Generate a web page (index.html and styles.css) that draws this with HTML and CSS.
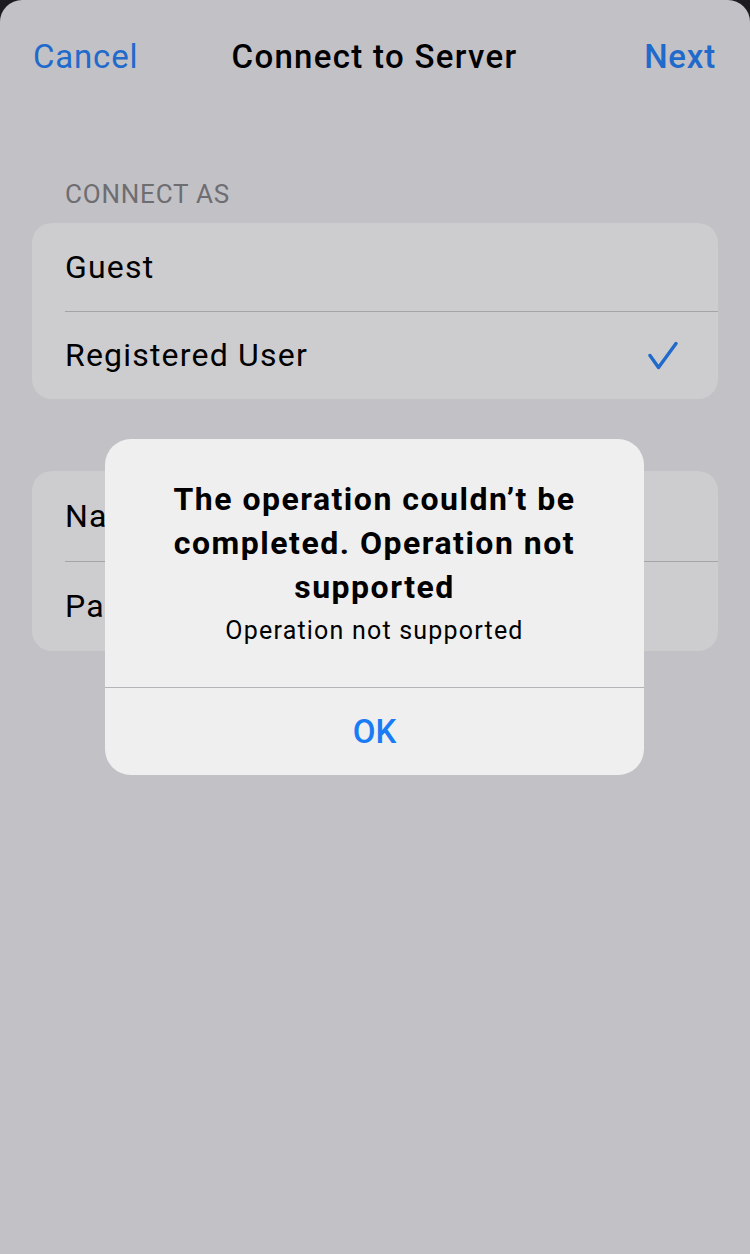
FILE: index.html
```html
<!DOCTYPE html>
<html lang="en">
<head>
    <meta charset="UTF-8">
    <meta name="viewport" content="width=device-width, initial-scale=1.0">
    <title>Connect to Server</title>
    <link rel="stylesheet" href="styles.css">
</head>
<body>
<div class="sheet">
    <nav class="navbar">
        <a href="#" class="nav-btn">Cancel</a>
        <h1 class="nav-title">Connect to Server</h1>
        <a href="#" class="nav-btn nav-next">Next</a>
    </nav>

    <div class="section-header">CONNECT AS</div>
    <div class="group">
        <div class="row">
            <span>Guest</span>
        </div>
        <div class="row">
            <span>Registered User</span>
            <svg class="check" width="32" height="30" viewBox="0 0 32 30">
                <path d="M2 15.5 L10.5 27.5 L28 3.5" fill="none" stroke="#1f6acb" stroke-width="3.4" stroke-linecap="round" stroke-linejoin="round"/>
            </svg>
        </div>
    </div>

    <div class="group group-login">
        <div class="row">
            <span>Name</span>
        </div>
        <div class="row">
            <span>Password</span>
        </div>
    </div>
</div>

<div class="alert">
    <div class="alert-body">
        <div class="alert-title">The operation couldn’t be completed. Operation not supported</div>
        <div class="alert-message">Operation not supported</div>
    </div>
    <button class="alert-btn">OK</button>
</div>
</body>
</html>
```

FILE: styles.css
```css
body {
    margin: 0;
    background-color: #1c1c1e;
    font-family: Roboto, "Liberation Sans", sans-serif;
}
.sheet {
    background-color: #c2c1c6;
    border-radius: 22px 22px 0 0;
    min-height: 1254px;
}
.navbar {
    display: grid;
    grid-template-columns: 1fr auto 1fr;
    align-items: center;
    height: 112px;
    padding: 0 34px 0 33px;
}
.nav-btn {
    color: #1f6acb;
    text-decoration: none;
    font-size: 33px;
    letter-spacing: 0.8px;
    justify-self: start;
}
.nav-next {
    font-weight: 500;
    justify-self: end;
}
.nav-title {
    margin: 0;
    font-size: 33px;
    font-weight: 500;
    letter-spacing: 1.3px;
    color: #000;
}
.section-header {
    color: #6e6d72;
    font-size: 26px;
    letter-spacing: 0.8px;
    padding: 67px 0 14px 65px;
    line-height: 30px;
}
.group {
    margin: 0 32px;
    background-color: #cdcdcf;
    border-radius: 20px;
    overflow: hidden;
}
.group-login {
    margin-top: 72px;
}
.row {
    display: flex;
    align-items: center;
    justify-content: space-between;
    height: 87.5px;
    margin-left: 33px;
    padding-right: 38px;
    font-size: 32px;
    letter-spacing: 1.2px;
    color: #000;
}
.group-login .row {
    height: 89.5px;
}
.row + .row {
    border-top: 1px solid #a4a4a8;
}
.check {
    display: block;
}
.alert {
    position: absolute;
    left: 105px;
    top: 439px;
    width: 539px;
    background-color: #efeff0;
    border-radius: 26px;
    overflow: hidden;
}
.alert-body {
    padding: 38px 16px 41px;
    text-align: center;
}
.alert-title {
    font-size: 32px;
    font-weight: 700;
    line-height: 44px;
    letter-spacing: 1.5px;
    color: #000;
}
.alert-message {
    font-size: 25px;
    line-height: 30px;
    letter-spacing: 1.2px;
    margin-top: 7px;
    color: #000;
}
.alert-btn {
    display: block;
    width: 100%;
    height: 88px;
    border: none;
    border-top: 1px solid #b4b4b8;
    background: transparent;
    color: #1a7cf4;
    font-family: inherit;
    font-size: 33px;
    font-weight: 500;
    padding: 0;
}
```
